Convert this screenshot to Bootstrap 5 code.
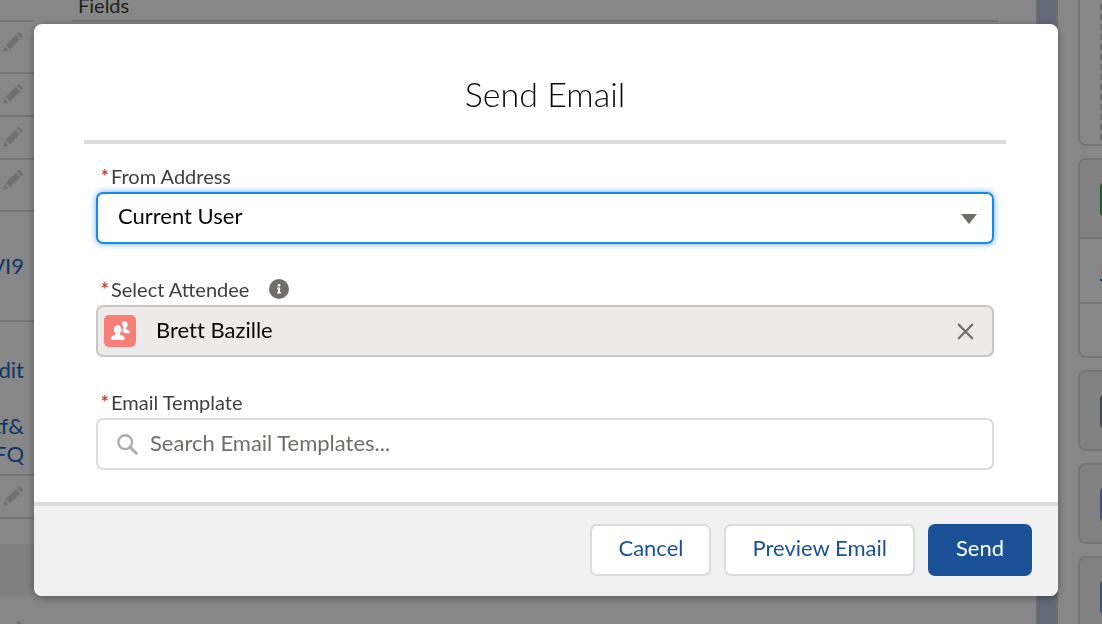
<!DOCTYPE html>
<html lang="en">
<head>
<meta charset="utf-8">
<meta name="viewport" content="width=device-width, initial-scale=1">
<title>Send Email</title>
<link href="https://cdn.jsdelivr.net/npm/bootstrap@5.3.0/dist/css/bootstrap.min.css" rel="stylesheet">
<style>
  :root { --line: #dddbda; --brand: #1b5297; }
  body { font-family: Lato, "Open Sans", sans-serif; font-size: 22px; line-height: 28px; color: #080707; overflow: hidden; }

  /* Record page behind the dialog */
  .record-page { height: 100vh; }
  .detail-col { width: 34px; }
  .detail-row { border-bottom: 2px solid var(--line); }
  .row-first { height: 22px; }
  .row-tall { height: 52px; }
  .row-short { height: 43px; }
  .row-link { padding: 40px 10px 40px 0; }
  .row-links { padding: 34px 10px 6px 0; }
  .detail-row a { color: #1468c4; text-decoration: none; white-space: nowrap; }
  .pencil { display: block; width: 20px; height: 20px; margin: 10px 0 0 3px; fill: #d6d2d1; flex: none; }
  .section-band { height: 52px; margin-top: 25px; background: #f1f1f1; }
  .after-band { padding-top: 15px; }
  .fields-col { margin: 0 38px; }
  .fields-title { height: 22px; border-bottom: 2px solid var(--line); padding: 0 6px; font-size: 20px; line-height: 10px; color: #3e3e3c; }
  .gutter { width: 22px; background: #b9c6e2; border: solid #d0cccb; border-width: 0 2px; }
  .side-col { width: 44px; padding-left: 20px; gap: 12px; }
  .side-panel { border: 2px solid var(--line); border-right: 0; border-radius: 8px 0 0 8px; overflow: hidden; flex: none; }
  .side-top { height: 146px; border-top: 0; border-top-left-radius: 0; padding: 0 0 4px 20px; }
  .drop-area { height: 100%; background: repeating-linear-gradient(#fff 0 4px, #d4d2d1 4px 10px); }
  .side-head { height: 77px; background: #f3f3f3; padding: 22px 0 0 20px; }
  .side-icon { display: block; width: 34px; height: 35px; border-radius: 5px; }
  .side-item { height: 65px; border-top: 2px solid var(--line); padding: 16px 0 0 20px; }
  .side-item a { color: #0070d2; }
  .side-rest { height: 54px; border-top: 2px solid var(--line); }

  /* Dialog */
  .modal-backdrop { --bs-backdrop-opacity: .47; }
  .email-dialog { max-width: none; margin: 24px 44px 24px 34px; }
  .email-dialog .modal-content { border: 0; border-radius: 8px; box-shadow: 0 2px 8px rgba(0,0,0,.35); }
  .email-dialog .modal-header { margin: 0 52px 0 50px; padding: 49px 0 26px; border-bottom: 4px solid var(--line); border-radius: 0; }
  .email-dialog .modal-title { font-size: 34px; line-height: 41px; font-weight: 300; color: #080707; }
  .email-dialog .modal-body { padding: 20px 64px 32px 62px; }
  .email-dialog .modal-footer { background: #f1f1f1; border-top: 4px solid var(--line); border-radius: 0 0 8px 8px; padding: 18px 26px 20px; gap: 13px; }
  .email-dialog .modal-footer > * { margin: 0; }
  .field-block + .field-block { margin-top: 33px; }
  .field-label { height: 24px; margin-bottom: 4px; padding-left: 5px; font-size: 20px; line-height: 24px; color: #3e3e3c; }
  .req { color: #c23934; width: 10px; font-size: 18px; font-weight: 700; }
  .field-box { height: 52px; border: 2px solid #dbdbdb; border-radius: 7px; background-color: #fff; color: #080707; font-size: 22px; line-height: 28px; }
  .field-box input { border: 0; background: none; outline: 0; padding: 0 0 2px; min-width: 0; color: #080707; font-variant-ligatures: none; }
  .field-box input::placeholder { color: #706e6b; opacity: 1; }
  .from-select { padding: 8px 40px 12px 20px; border-color: #1589ee; box-shadow: 0 0 6px rgba(0,112,210,.6);
    background-image: url("data:image/svg+xml,%3Csvg xmlns='http://www.w3.org/2000/svg' viewBox='0 0 16 10'%3E%3Cpath d='M0 0h16L8 10z' fill='%23706e6b'/%3E%3C/svg%3E");
    background-size: 16px 10px; background-position: right 15px top 20px; }
  .from-select:focus { border-color: #1589ee; box-shadow: 0 0 6px rgba(0,112,210,.6); }
  .chosen-box { background-color: #ecebea; border-color: #c9c7c5; padding: 0 18px 0 6px; }
  .chosen-box input { margin-left: 20px; }
  .search-box { padding: 0 18px 0 19px; }
  .search-box input { margin-left: 12px; }
  .icon-btn { border: 0; background: none; padding: 0; display: flex; flex: none; }
  .help-btn { margin-left: 20px; }
  .email-btn { --bs-btn-font-size: 22px; --bs-btn-line-height: 28px; --bs-btn-border-width: 2px; --bs-btn-border-radius: 7px;
    --bs-btn-color: var(--brand); --bs-btn-bg: #fff; --bs-btn-border-color: #dddbda; padding: 8px 26px 12px; }
  .email-btn-brand { --bs-btn-color: #fff; --bs-btn-bg: var(--brand); --bs-btn-border-color: var(--brand); }
</style>
</head>
<body>
<svg class="d-none" aria-hidden="true">
  <symbol id="pencil" viewBox="0 0 20 20">
    <path d="M0.300 19.700l1.200-5.200 4 4zM2.700 12.900L12.600 3l4.400 4.400-9.900 9.900zM13.800 1.800l1.300-1.300c.5-.5 1.200-.5 1.700 0l2.700 2.700c.5.5.5 1.200 0 1.700l-1.300 1.300z"/>
  </symbol>
</svg>

<div class="record-page d-flex overflow-hidden" aria-hidden="true">
  <main class="d-flex flex-grow-1">
    <div class="detail-col flex-shrink-0">
      <div class="detail-row row-first"></div>
      <div class="detail-row row-tall d-flex"><svg class="pencil"><use href="#pencil"/></svg></div>
      <div class="detail-row row-short d-flex"><svg class="pencil"><use href="#pencil"/></svg></div>
      <div class="detail-row row-short d-flex"><svg class="pencil"><use href="#pencil"/></svg></div>
      <div class="detail-row row-tall d-flex"><svg class="pencil"><use href="#pencil"/></svg></div>
      <div class="detail-row row-link d-flex justify-content-end"><a href="#">VI9</a></div>
      <div class="detail-row row-links d-flex flex-column align-items-end">
        <a href="#">dit</a><br><a href="#">tf&amp;</a><a href="#">FQ</a>
      </div>
      <div class="detail-row row-short d-flex"><svg class="pencil"><use href="#pencil"/></svg></div>
      <div class="section-band"></div>
      <div class="after-band"><svg class="pencil"><use href="#pencil"/></svg></div>
    </div>
    <section class="fields-col flex-grow-1">
      <div class="fields-title">Fields</div>
    </section>
  </main>
  <div class="gutter flex-shrink-0"></div>
  <aside class="side-col d-flex flex-column flex-shrink-0">
    <div class="side-panel side-top"><div class="drop-area"></div></div>
    <div class="side-panel">
      <div class="side-head"><span class="side-icon" style="background:#3ba755"></span></div>
      <div class="side-item"><a href="#">E</a></div>
      <div class="side-rest"></div>
    </div>
    <div class="side-panel"><div class="side-head"><span class="side-icon" style="background:#7f8299"></span></div></div>
    <div class="side-panel"><div class="side-head"><span class="side-icon" style="background:#8a8fe8"></span></div></div>
    <div class="side-panel"><div class="side-head"><span class="side-icon" style="background:#779dd8"></span></div></div>
  </aside>
</div>

<div class="modal-backdrop show"></div>
<div class="modal d-block" role="dialog" aria-modal="true" aria-labelledby="dialogTitle">
  <div class="modal-dialog email-dialog">
    <form class="modal-content">
      <div class="modal-header justify-content-center">
        <h1 class="modal-title" id="dialogTitle">Send Email</h1>
      </div>
      <div class="modal-body">
        <div class="field-block">
          <label class="field-label d-flex" for="fromAddress"><span class="req">*</span>From Address</label>
          <select class="form-select field-box from-select" id="fromAddress">
            <option>Current User</option>
          </select>
        </div>
        <div class="field-block">
          <div class="field-label d-flex align-items-center">
            <label class="d-flex" for="attendee"><span class="req">*</span>Select Attendee</label>
            <button type="button" class="icon-btn help-btn" aria-label="Help">
              <svg width="20" height="20" viewBox="0 0 20 20"><circle cx="10" cy="10" r="10" fill="#706e6b"/><circle cx="10" cy="6.300" r="1.400" fill="#fff"/><path d="M8.200 8.600h2.900v4.700h1v1.300H8v-1.300h1V9.900h-.8z" fill="#fff"/></svg>
            </button>
          </div>
          <div class="field-box chosen-box d-flex align-items-center">
            <svg class="flex-shrink-0" width="32" height="32" viewBox="0 0 32 32">
              <rect width="32" height="32" rx="5" fill="#f87f78"/>
              <path fill="#fff" d="M17.300 8.200c.6-1.300 1.700-2 3-2 2 0 3.300 1.500 3.300 3.500 0 1.300-.5 2.500-1.300 3.200-.5.600-.2 1.300.5 1.600 1.700.7 2.800 1.300 2.900 2.600.1.700-.4 1.200-1 1.200h-3.700c-.6-.7-1.500-1.200-2.600-1.700-.2-.1-.2-.3 0-.5 1.300-2.400 1.300-5.300-1.100-7.900z"/>
              <path fill="#fff" d="M13.700 10.200c2.200 0 3.800 1.700 3.800 4 0 1.500-.6 2.800-1.500 3.700-.7.700-.4 1.500.5 1.900 2.500 1 4.100 1.700 4.200 3.800.1.900-.5 1.500-1.300 1.500H8.100c-.8 0-1.400-.6-1.300-1.500.1-2.100 1.700-2.800 4.100-3.800.9-.4 1.200-1.200.5-1.900-.9-.9-1.500-2.200-1.500-3.700 0-2.300 1.600-4 3.800-4z"/>
            </svg>
            <input class="flex-grow-1" type="text" id="attendee" value="Brett Bazille" readonly>
            <button type="button" class="icon-btn" aria-label="Clear selection">
              <svg width="17" height="17" viewBox="0 0 17 17"><path d="M1.800 1.800l13.400 13.400M15.200 1.800L1.800 15.200" stroke="#706e6b" stroke-width="2.300" stroke-linecap="round"/></svg>
            </button>
          </div>
        </div>
        <div class="field-block">
          <label class="field-label d-flex" for="template"><span class="req">*</span>Email Template</label>
          <div class="field-box search-box d-flex align-items-center">
            <svg class="flex-shrink-0" width="21" height="21" viewBox="0 0 21 21" fill="none" stroke="#b0adab"><circle cx="8.200" cy="8.200" r="6.900" stroke-width="2.400"/><path d="M13 13l6.300 6.300" stroke-width="3" stroke-linecap="round"/></svg>
            <input class="flex-grow-1" type="text" id="template" placeholder="Search Email Templates...">
          </div>
        </div>
      </div>
      <div class="modal-footer">
        <button type="button" class="btn email-btn">Cancel</button>
        <button type="button" class="btn email-btn">Preview Email</button>
        <button type="submit" class="btn email-btn email-btn-brand">Send</button>
      </div>
    </form>
  </div>
</div>
<script src="https://cdn.jsdelivr.net/npm/bootstrap@5.3.0/dist/js/bootstrap.bundle.min.js"></script>
</body>
</html>
